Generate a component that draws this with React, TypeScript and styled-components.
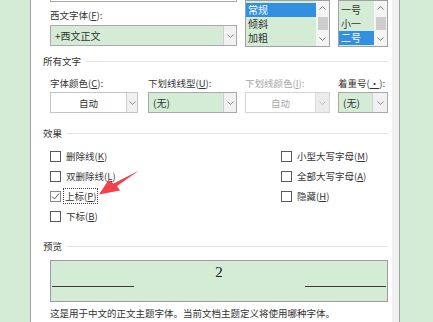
import React from 'react';
import styled, { createGlobalStyle } from 'styled-components';

const GREEN = '#d4ebd5';
const FONT = `"Noto Sans CJK SC", "Microsoft YaHei", sans-serif`;

const Global = createGlobalStyle`
  html, body { margin: 0; padding: 0; width: 433px; height: 322px; overflow: hidden; background: ${GREEN}; }
  #root { width: 433px; height: 322px; }
  * { box-sizing: border-box; }
  u { text-decoration: underline; text-underline-offset: 1px; }
`;

const Page = styled.div`
  position: relative;
  display: flex;
  width: 433px;
  height: 322px;
  background: ${GREEN};
  font-family: ${FONT};
  font-size: 9.5px;
  color: #333;
  overflow: hidden;
`;

const SideStrip = styled.div`
  width: 30px;
  flex-shrink: 0;
`;

const RightStrip = styled.div`
  flex: 1;
`;

const Gutter = styled.div`
  width: 8px;
  flex-shrink: 0;
  background: #f0f0f0;
  border-right: 1px solid #a3a3a3;
`;

const Dialog = styled.div`
  width: 362px;
  flex-shrink: 0;
  border-left: 1px solid #a3a3a3;
  background: #fff;
  padding: 0 4px 0 12px;
  display: flex;
  flex-direction: column;
`;

const Indent = styled.div`
  margin-left: 7px;
`;

const TopGrid = styled(Indent)`
  display: grid;
  grid-template-columns: 187px 85px 50px;
  column-gap: 8px;
  align-items: start;
`;

const Column = styled.div`
  display: flex;
  flex-direction: column;
`;

const ComboStub = styled.div`
  height: 2px;
  border: 1px solid #a9a9a9;
  border-top: none;
`;

const Label = styled.div<{ $disabled?: boolean; $mt?: number }>`
  line-height: 12px;
  height: 12px;
  white-space: nowrap;
  margin-top: ${(p) => p.$mt ?? 0}px;
  color: ${(p) => (p.$disabled ? '#a6a6a6' : '#333')};
`;

const ComboBox = styled.div<{ $green?: boolean; $disabled?: boolean; $w: number; $mt?: number }>`
  display: flex;
  width: ${(p) => p.$w}px;
  height: 21px;
  margin-top: ${(p) => p.$mt ?? 0}px;
  border: 1px solid ${(p) => (p.$disabled ? '#d4d4d4' : p.$green ? '#a9a9a9' : '#c4c4c4')};
  background: ${(p) => (p.$green ? GREEN : '#fff')};
`;

const ComboText = styled.div<{ $center?: boolean; $disabled?: boolean }>`
  flex: 1;
  display: flex;
  align-items: center;
  justify-content: ${(p) => (p.$center ? 'center' : 'flex-start')};
  padding-left: ${(p) => (p.$center ? 0 : 4)}px;
  font-size: ${(p) => (p.$center ? 9.5 : 10)}px;
  color: ${(p) => (p.$disabled ? '#a6a6a6' : '#333')};
  white-space: nowrap;
`;

const DropButton = styled.div<{ $w?: number; $disabled?: boolean }>`
  width: ${(p) => p.$w ?? 13}px;
  flex-shrink: 0;
  display: flex;
  align-items: center;
  justify-content: center;
  border-left: 1px solid ${(p) => (p.$disabled ? '#dcdcdc' : '#cfcfcf')};
  background: ${(p) => (p.$disabled ? '#ececec' : '#f1f1f1')};
`;

const ListBox = styled.div<{ $w: number }>`
  display: flex;
  width: ${(p) => p.$w}px;
  height: 47px;
  border: 1px solid #a0a0a0;
  background: ${GREEN};
`;

const ListItems = styled.div`
  flex: 1;
  display: flex;
  flex-direction: column;
  padding-top: 2px;
  min-width: 0;
`;

const ListItem = styled.div<{ $selected?: boolean }>`
  height: 14px;
  line-height: 14px;
  padding-left: 2px;
  font-size: 10px;
  white-space: nowrap;
  background: ${(p) => (p.$selected ? '#3390e0' : 'transparent')};
  color: ${(p) => (p.$selected ? '#fff' : '#333')};
`;

const ScrollBar = styled.div`
  width: 13px;
  flex-shrink: 0;
  display: flex;
  flex-direction: column;
  align-items: center;
  background: #f4f4f4;
`;

const ScrollArrow = styled.div`
  height: 14px;
  width: 100%;
  display: flex;
  align-items: center;
  justify-content: center;
`;

const Thumb = styled.div`
  width: 10px;
  height: 13px;
  margin: 2px 0;
  background: #cdcdcd;
`;

const SectionHeader = styled.div<{ $mt: number }>`
  display: flex;
  align-items: center;
  gap: 5px;
  height: 12px;
  line-height: 12px;
  margin-top: ${(p) => p.$mt}px;
  white-space: nowrap;
  color: #333;
  &::after {
    content: '';
    flex: 1;
    height: 1px;
    background: #e3e3e3;
  }
`;

const FieldGrid = styled(Indent)<{ $mt: number }>`
  display: grid;
  grid-template-columns: 98px 97px 93px 50px;
  margin-top: ${(p) => p.$mt}px;
`;

const EffectsGrid = styled(Indent)`
  display: grid;
  grid-template-columns: 231px 1fr;
  margin-top: 7px;
`;

const CheckRow = styled.div`
  display: flex;
  align-items: center;
  height: 20px;
  gap: 3px;
  white-space: nowrap;
`;

const Box = styled.div<{ $checked?: boolean }>`
  width: 11px;
  height: 11px;
  flex-shrink: 0;
  border: 1px solid ${(p) => (p.$checked ? '#8a8a8a' : '#5a5a5a')};
  background: #fff;
  display: flex;
  align-items: center;
  justify-content: center;
`;

const CheckText = styled.span<{ $focus?: boolean }>`
  line-height: 12px;
  padding: 1px 1px;
  margin-left: ${(p) => (p.$focus ? -1 : 0)}px;
  border: ${(p) => (p.$focus ? '1px dotted #444' : '1px solid transparent')};
`;

const PreviewBox = styled(Indent)`
  margin-top: 8px;
  height: 42px;
  border: 1px solid #9c9c9c;
  background: ${GREEN};
  display: flex;
  flex-direction: column;
`;

const SampleText = styled.div`
  height: 25px;
  display: flex;
  align-items: center;
  justify-content: center;
  font-family: "Liberation Serif", "Times New Roman", serif;
  font-size: 15px;
  color: #222;
  padding-bottom: 2px;
`;

const BaselineRow = styled.div`
  display: flex;
  justify-content: space-between;
  margin: 0 1px;
`;

const BaseLine = styled.div<{ $w: number }>`
  width: ${(p) => p.$w}px;
  height: 1px;
  background: #3c3c3c;
`;

const Description = styled(Indent)`
  margin-top: 5px;
  line-height: 12px;
  white-space: nowrap;
  color: #333;
`;

const Overlay = styled.svg`
  position: absolute;
  left: 0;
  top: 0;
  pointer-events: none;
`;

const ChevronDown = ({ color = '#8a8a8a' }: { color?: string }) => (
  <svg width="7" height="4" viewBox="0 0 7 4">
    <polyline points="0.5,0.5 3.5,3.5 6.5,0.5" fill="none" stroke={color} strokeWidth="1" />
  </svg>
);

const ChevronUp = ({ color = '#8a8a8a' }: { color?: string }) => (
  <svg width="7" height="4" viewBox="0 0 7 4">
    <polyline points="0.5,3.5 3.5,0.5 6.5,3.5" fill="none" stroke={color} strokeWidth="1" />
  </svg>
);

const Scroll = () => (
  <ScrollBar>
    <ScrollArrow>
      <ChevronUp color="#7a7a7a" />
    </ScrollArrow>
    <Thumb />
    <ScrollArrow>
      <ChevronDown color="#7a7a7a" />
    </ScrollArrow>
  </ScrollBar>
);

type CheckProps = { label: string; keyChar: string; checked?: boolean; focus?: boolean };

const Check = ({ label, keyChar, checked, focus }: CheckProps) => (
  <CheckRow>
    <Box $checked={checked}>
      {checked && (
        <svg width="9" height="9" viewBox="0 0 9 9">
          <polyline points="1,4.5 3.5,7 8,1.5" fill="none" stroke="#5a5a5a" strokeWidth="1" />
        </svg>
      )}
    </Box>
    <CheckText $focus={focus}>
      {label}(<u>{keyChar}</u>)
    </CheckText>
  </CheckRow>
);

export default function App() {
  return (
    <>
      <Global />
      <Page>
        <SideStrip />
        <Dialog>
          <TopGrid>
            <Column>
              <ComboStub />
              <Label $mt={7}>
                西文字体(<u>F</u>):
              </Label>
              <ComboBox $green $w={187} $mt={4}>
                <ComboText>+西文正文</ComboText>
                <DropButton>
                  <ChevronDown />
                </DropButton>
              </ComboBox>
            </Column>
            <ListBox $w={85}>
              <ListItems>
                <ListItem $selected>常规</ListItem>
                <ListItem>倾斜</ListItem>
                <ListItem>加粗</ListItem>
              </ListItems>
              <Scroll />
            </ListBox>
            <ListBox $w={50}>
              <ListItems>
                <ListItem>一号</ListItem>
                <ListItem>小一</ListItem>
                <ListItem $selected>二号</ListItem>
              </ListItems>
              <Scroll />
            </ListBox>
          </TopGrid>

          <SectionHeader $mt={8}>所有文字</SectionHeader>

          <FieldGrid $mt={10}>
            <Column>
              <Label>
                字体颜色(<u>C</u>):
              </Label>
              <ComboBox $w={88} $mt={3}>
                <ComboText $center>自动</ComboText>
                <DropButton $w={11}>
                  <ChevronDown />
                </DropButton>
              </ComboBox>
            </Column>
            <Column>
              <Label>
                下划线线型(<u>U</u>):
              </Label>
              <ComboBox $green $w={89} $mt={3}>
                <ComboText>(无)</ComboText>
                <DropButton>
                  <ChevronDown />
                </DropButton>
              </ComboBox>
            </Column>
            <Column>
              <Label $disabled>
                下划线颜色(<u>I</u>):
              </Label>
              <ComboBox $disabled $w={85} $mt={3}>
                <ComboText $center $disabled>
                  自动
                </ComboText>
                <DropButton $disabled $w={14}>
                  <ChevronDown color="#c4c4c4" />
                </DropButton>
              </ComboBox>
            </Column>
            <Column>
              <Label>
                着重号(<u>·</u>):
              </Label>
              <ComboBox $green $w={50} $mt={3}>
                <ComboText>(无)</ComboText>
                <DropButton $w={15}>
                  <ChevronDown />
                </DropButton>
              </ComboBox>
            </Column>
          </FieldGrid>

          <SectionHeader $mt={14}>效果</SectionHeader>

          <EffectsGrid>
            <Column>
              <Check label="删除线" keyChar="K" />
              <Check label="双删除线" keyChar="L" />
              <Check label="上标" keyChar="P" checked focus />
              <Check label="下标" keyChar="B" />
            </Column>
            <Column>
              <Check label="小型大写字母" keyChar="M" />
              <Check label="全部大写字母" keyChar="A" />
              <Check label="隐藏" keyChar="H" />
            </Column>
          </EffectsGrid>

          <SectionHeader $mt={14}>预览</SectionHeader>

          <PreviewBox>
            <SampleText>2</SampleText>
            <BaselineRow>
              <BaseLine $w={82} />
              <BaseLine $w={81} />
            </BaselineRow>
          </PreviewBox>

          <Description>这是用于中文的正文主题字体。当前文档主题定义将使用哪种字体。</Description>
        </Dialog>
        <Gutter />
        <RightStrip />
        <Overlay width="433" height="322" viewBox="0 0 433 322">
          <polygon
            points="139,170.5 117,186 120,190.5 99,194.5 108.5,180 113.5,183.5"
            fill="#f2414a"
          />
        </Overlay>
      </Page>
    </>
  );
}
